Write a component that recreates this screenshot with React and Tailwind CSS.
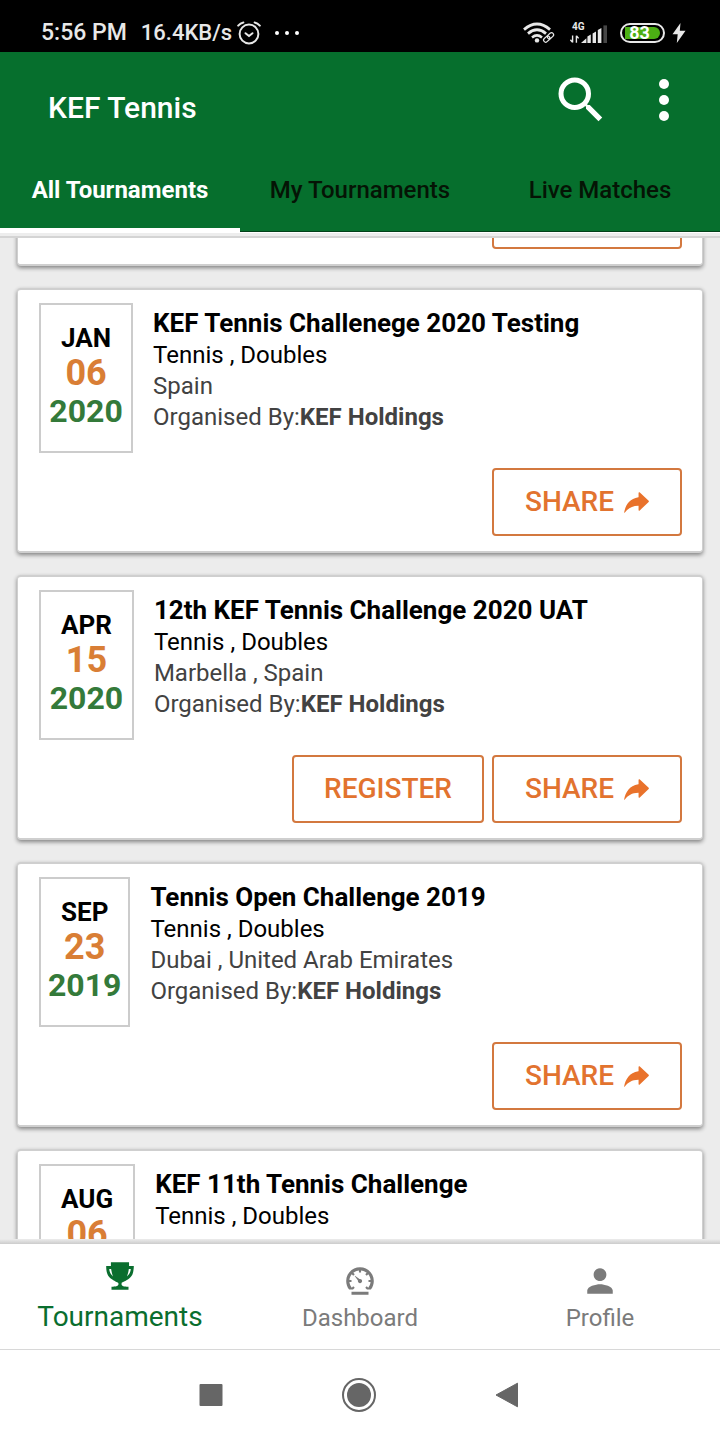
import React, { useState } from 'react';
import { IoIosShareAlt, IoMdPerson, IoMdSpeedometer, IoMdTrophy } from 'react-icons/io';
import { MdSearch } from 'react-icons/md';

const tabs = ['All Tournaments', 'My Tournaments', 'Live Matches'];

const tournaments = [
  {
    id: 1,
    month: 'JAN',
    day: '06',
    year: '2020',
    title: 'KEF Tennis Challenege 2020 Testing',
    type: 'Tennis , Doubles',
    place: 'Spain',
    organiser: 'KEF Holdings',
    canShare: true,
  },
  {
    id: 2,
    month: 'APR',
    day: '15',
    year: '2020',
    title: '12th KEF Tennis Challenge 2020 UAT',
    type: 'Tennis , Doubles',
    place: 'Marbella , Spain',
    organiser: 'KEF Holdings',
    canRegister: true,
    canShare: true,
  },
  {
    id: 3,
    month: 'SEP',
    day: '23',
    year: '2019',
    title: 'Tennis Open Challenge 2019',
    type: 'Tennis , Doubles',
    place: 'Dubai , United Arab Emirates',
    organiser: 'KEF Holdings',
    canShare: true,
  },
  {
    id: 4,
    month: 'AUG',
    day: '06',
    title: 'KEF 11th Tennis Challenge',
    type: 'Tennis , Doubles',
  },
];

const navItems = [
  { label: 'Tournaments', icon: IoMdTrophy },
  { label: 'Dashboard', icon: IoMdSpeedometer },
  { label: 'Profile', icon: IoMdPerson },
];

const AlarmIcon = () => (
  <svg width="24" height="24" viewBox="0 0 24 24" fill="none" stroke="currentColor" strokeWidth="2" strokeLinecap="round">
    <circle cx="12" cy="13" r="9.4" />
    <path d="M8.5 12.2l3.5 2.8 3.5-2.8" />
    <path d="M1.2 4.6Q3.4 2 6.4 1.4M22.8 4.6Q20.6 2 17.6 1.4" />
  </svg>
);

const WifiIcon = () => (
  <svg width="34" height="22" viewBox="0 0 34 22" fill="none" stroke="currentColor">
    <path d="M2 7.6Q15 -3.6 28 7.6" strokeWidth="2.8" />
    <path d="M6 11.6Q15 4 24 11.6" strokeWidth="2.8" />
    <path d="M10 15.4Q15 11.4 20 15.4" strokeWidth="2.6" />
    <circle cx="15" cy="18.4" r="2.2" fill="currentColor" stroke="none" />
    <g transform="rotate(-42 26.5 15.5)" strokeWidth="1.2">
      <rect x="20.6" y="13.4" width="7" height="4.2" rx="2.1" />
      <rect x="25.6" y="13.4" width="7" height="4.2" rx="2.1" />
    </g>
  </svg>
);

const SignalIcon = () => (
  <svg width="38" height="22" viewBox="0 0 38 22" fill="currentColor">
    <text x="2" y="8" fontSize="10" fontWeight="700">4G</text>
    <path d="M2.6 13.6v7M0.4 17.8l2.2 2.600M6.4 20.800v-7M8.600 16.400l-2.200-2.600" stroke="currentColor" strokeWidth="1.4" fill="none" />
    <path d="M11 21l5.400-4.800v4.800zM17.400 14.600l3.400-2v8.400h-3.400zM22.600 11.400l3.400-2v11.600h-3.400zM27.800 8l3.600-2v15h-3.600z" />
    <path d="M33.400 3.400h3.600V21h-3.600z" opacity="0.3" />
  </svg>
);

const StatusBar = () => (
  <div className="flex h-[52px] items-center justify-between bg-black pl-[41px] pr-[34px] pt-[14px] text-[#e8e8e8]">
    <div className="flex items-center">
      <div className="mr-[5px] flex items-baseline gap-[14px] font-medium">
        <span className="text-[23px]">5:56 PM</span>
        <span className="text-[22px]">16.4KB/s</span>
      </div>
      <AlarmIcon />
      <div className="ml-[14px] flex gap-[6px]">
        <span className="h-1 w-1 rounded-full bg-white" />
        <span className="h-1 w-1 rounded-full bg-white" />
        <span className="h-1 w-1 rounded-full bg-white" />
      </div>
    </div>
    <div className="flex items-center">
      <WifiIcon />
      <span className="ml-[14px]"><SignalIcon /></span>
      <div className="ml-3 flex h-5 w-[45px] items-center justify-center rounded-full border-2 border-[#e8e8e8] px-[3px]">
        <span className="flex h-3 w-full items-center justify-center rounded-r-full bg-[#4caf14] pr-[6px] text-[18px] font-bold leading-none text-white">
          83
        </span>
      </div>
      <svg className="ml-[7px]" width="14" height="20" viewBox="0 0 14 20" fill="currentColor">
        <path d="M8.500 0L0.500 11.200h5.200L4.800 20 13.500 7.800H7.800z" />
      </svg>
    </div>
  </div>
);

const Header = ({ activeTab, onSelect }) => (
  <header className="bg-[#066f2d]">
    <div className="flex h-24 items-center justify-between pl-12 pr-[34px]">
      <h1 className="pt-[14px] text-[30px] font-medium text-white">KEF Tennis</h1>
      <div className="flex items-center">
        <button type="button" aria-label="Search" className="text-white">
          <MdSearch size={60} />
        </button>
        <button type="button" aria-label="More options" className="ml-[31px] flex w-11 flex-col items-center gap-[6px]">
          <span className="h-[10px] w-[10px] rounded-full bg-white" />
          <span className="h-[10px] w-[10px] rounded-full bg-white" />
          <span className="h-[10px] w-[10px] rounded-full bg-white" />
        </button>
      </div>
    </div>
    <nav className="grid h-[84px] grid-cols-3">
      {tabs.map((tab) => (
        <button
          key={tab}
          type="button"
          onClick={() => onSelect(tab)}
          className={
            tab === activeTab
              ? 'border-b-4 border-white pt-1 text-[24px] font-bold text-white'
              : 'border-b border-[#03401a] pt-px text-[24px] font-medium text-[#051405]'
          }
        >
          {tab}
        </button>
      ))}
    </nav>
    <div className="h-[6px] border-t border-b-2 border-t-white border-b-[#d4d4d4] bg-[#ededed]" />
  </header>
);

const ShareButton = () => (
  <button
    type="button"
    className="flex h-[68px] items-center gap-[6px] rounded border-2 border-[#d3783f] pl-[31px] pr-[27px] text-[28px] font-medium text-[#e2732f]"
  >
    SHARE
    <IoIosShareAlt size={33} color="#e9722b" />
  </button>
);

const Card = ({ children }) => (
  <article className="rounded border-x border-y-2 border-[#cfcfcf] bg-white pb-[15px] pl-[21px] pr-5 pt-[13px] shadow-[0_2px_4px_rgba(0,0,0,0.45)]">
    {children}
  </article>
);

const TournamentCard = ({ item }) => (
  <Card>
    <div className="flex items-start gap-5">
      <div className="flex h-[150px] flex-col items-center border-2 border-[#cccccc] pt-4 font-bold">
        <span className="px-5 text-[26px] leading-[34px] text-black">{item.month}</span>
        <span className="text-[36px] leading-9 text-[#d97e35]">{item.day}</span>
        <span className="text-[32px] leading-10 text-[#347a3a]">{item.year}</span>
      </div>
      <div className="pt-[5px] text-[24px] leading-[31px] text-[#424242]">
        <h2 className="pb-px text-[26px] font-bold leading-[31px] text-black">{item.title}</h2>
        <p className="text-black">{item.type}</p>
        {item.place && <p>{item.place}</p>}
        {item.organiser && (
          <p>
            Organised By:<span className="font-bold">{item.organiser}</span>
          </p>
        )}
      </div>
    </div>
    <div className="mt-[15px] flex justify-end gap-2">
      {item.canRegister && (
        <button
          type="button"
          className="h-[68px] rounded border-2 border-[#d3783f] px-[30px] text-[28px] font-medium text-[#e2732f]"
        >
          REGISTER
        </button>
      )}
      {item.canShare && <ShareButton />}
    </div>
  </Card>
);

const BottomNav = () => (
  <div className="border-b border-[#d8d8d8] bg-white">
    <div className="h-[5px] bg-linear-to-b from-[#ececec] to-[#cccccc]" />
    <nav className="grid h-[105px] grid-cols-3">
      {navItems.map(({ label, icon: Icon }, i) => (
        <a
          key={label}
          href="#"
          className={
            i === 0
              ? 'flex flex-col items-center justify-center gap-[6px] text-[28px] leading-9 text-[#0a6e2e]'
              : 'flex flex-col items-center justify-center gap-1 pt-1 text-[24px] leading-8 text-[#7b7b7b]'
          }
        >
          <Icon size={34} />
          {label}
        </a>
      ))}
    </nav>
  </div>
);

const SystemNav = () => (
  <div className="flex h-[90px] items-center justify-center gap-[118px] bg-white pr-[3px] text-[#666666]">
    <button type="button" aria-label="Recent apps">
      <svg width="24" height="24" viewBox="0 0 24 24" fill="currentColor">
        <rect x="0.500" y="1" width="23" height="22" rx="1" />
      </svg>
    </button>
    <button type="button" aria-label="Home">
      <svg width="36" height="36" viewBox="0 0 36 36" fill="currentColor">
        <circle cx="18" cy="18" r="16" fill="none" stroke="currentColor" strokeWidth="2" />
        <circle cx="18" cy="18" r="12" />
      </svg>
    </button>
    <button type="button" aria-label="Back">
      <svg width="24" height="26" viewBox="0 0 24 26" fill="currentColor" stroke="currentColor" strokeLinejoin="round">
        <path d="M1 13L22.500 1.200v23.600z" />
      </svg>
    </button>
  </div>
);

export default function App() {
  const [activeTab, setActiveTab] = useState(tabs[0]);

  return (
    <div className="flex h-screen flex-col bg-[#ececec] font-['Roboto',sans-serif]">
      <StatusBar />
      <Header activeTab={activeTab} onSelect={setActiveTab} />
      <main className="min-h-0 flex-1 overflow-y-auto px-[17px] [scrollbar-width:none]">
        {/* list is scrolled part way past the first card */}
        <div className="-mt-18 flex flex-col gap-[22px]">
          <Card>
            <div className="flex justify-end">
              <button type="button" aria-label="Share" className="h-[68px] w-[190px] rounded border-2 border-[#d3783f]" />
            </div>
          </Card>
          {tournaments.map((item) => (
            <TournamentCard key={item.id} item={item} />
          ))}
        </div>
      </main>
      <BottomNav />
      <SystemNav />
    </div>
  );
}
